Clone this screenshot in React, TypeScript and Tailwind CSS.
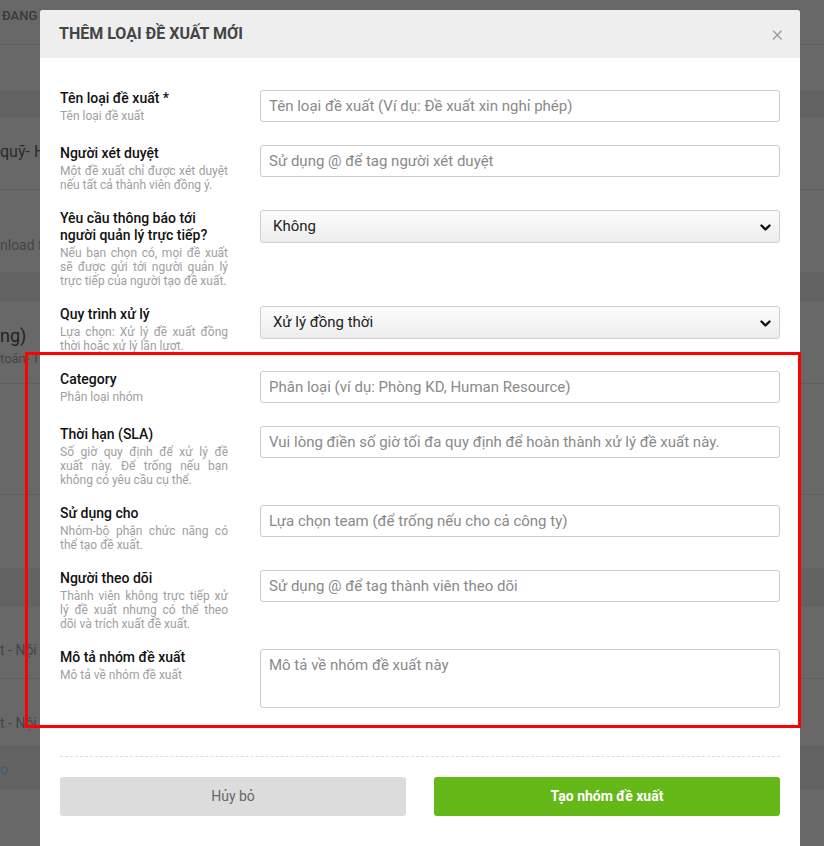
import React from "react";

const rows: {
  title: string;
  sub: string;
  kind: "input" | "select" | "textarea";
  value: string;
}[] = [
  { title: "Tên loại đề xuất *", sub: "Tên loại đề xuất", kind: "input", value: "Tên loại đề xuất (Ví dụ: Đề xuất xin nghỉ phép)" },
  { title: "Người xét duyệt", sub: "Một đề xuất chỉ được xét duyệt nếu tất cả thành viên đồng ý.", kind: "input", value: "Sử dụng @ để tag người xét duyệt" },
  { title: "Yêu cầu thông báo tới người quản lý trực tiếp?", sub: "Nếu bạn chọn có, mọi đề xuất sẽ được gửi tới người quản lý trực tiếp của người tạo đề xuất.", kind: "select", value: "Không" },
  { title: "Quy trình xử lý", sub: "Lựa chọn: Xử lý đề xuất đồng thời hoặc xử lý lần lượt.", kind: "select", value: "Xử lý đồng thời" },
  { title: "Category", sub: "Phân loại nhóm", kind: "input", value: "Phân loại (ví dụ: Phòng KD, Human Resource)" },
  { title: "Thời hạn (SLA)", sub: "Số giờ quy định để xử lý đề xuất này. Để trống nếu bạn không có yêu cầu cụ thể.", kind: "input", value: "Vui lòng điền số giờ tối đa quy định để hoàn thành xử lý đề xuất này." },
  { title: "Sử dụng cho", sub: "Nhóm-bộ phận chức năng có thể tạo đề xuất.", kind: "input", value: "Lựa chọn team (để trống nếu cho cả công ty)" },
  { title: "Người theo dõi", sub: "Thành viên không trực tiếp xử lý đề xuất nhưng có thể theo dõi và trích xuất đề xuất.", kind: "input", value: "Sử dụng @ để tag thành viên theo dõi" },
  { title: "Mô tả nhóm đề xuất", sub: "Mô tả về nhóm đề xuất", kind: "textarea", value: "Mô tả về nhóm đề xuất này" },
];

function Chevron() {
  return (
    <svg width="11" height="8" viewBox="0 0 11 8" className="absolute right-[8px] top-[13px]">
      <path d="M1.5 1.5 L5.5 5.5 L9.5 1.5" fill="none" stroke="#111" strokeWidth="2.4" strokeLinecap="round" strokeLinejoin="round" />
    </svg>
  );
}

function Field({ kind, value }: { kind: string; value: string }) {
  if (kind === "select") {
    return (
      <div className="relative h-[33px] w-full rounded-[3px] border border-[#cfcfcf] bg-linear-to-b from-[#fcfcfc] to-[#ededed] pl-[12px] text-[15px] leading-[31px] text-[#222]">
        {value}
        <Chevron />
      </div>
    );
  }
  if (kind === "textarea") {
    return (
      <textarea
        placeholder={value}
        className="block h-[59px] w-full resize-none rounded-[3px] border border-[#cccccc] px-[8px] py-[5px] text-[15px] leading-[20px] outline-none placeholder:text-[#8a8a8a]"
      />
    );
  }
  return (
    <input
      placeholder={value}
      className="block h-[32px] w-full rounded-[3px] border border-[#cccccc] px-[8px] text-[15px] outline-none placeholder:text-[#8a8a8a]"
    />
  );
}

function Background() {
  return (
    <div className="absolute inset-0 bg-[#686868] text-[#333] font-['Roboto',sans-serif]">
      <div className="h-[45px] border-b border-[#5e5e5e] pl-[2px] pt-[6px] text-[13px] font-medium text-[#3a3a3a]">ĐANG</div>
      <div className="h-[45px]" />
      <div className="h-[28px] bg-[#636363]" />
      <div className="h-[72px] border-b border-[#5e5e5e] pt-[22px] text-[16px] text-[#2a2a2a]">quỹ- H</div>
      <div className="h-[82px] pt-[45px] text-[14px] text-[#444]">nload fil</div>
      <div className="h-[30px] bg-[#636363]" />
      <div className="h-[82px] border-b border-[#5e5e5e] pt-[20px] text-[18px] text-[#222]">
        ng)
        <div className="text-[13px] text-[#444]">toán- T</div>
      </div>
      <div className="h-[111px] border-b border-[#5e5e5e]" />
      <div className="h-[73px]" />
      <div className="h-[39px] bg-[#636363]" />
      <div className="h-[72px] border-b border-[#5e5e5e] pt-[33px] text-[14px] text-[#444]">t - Nội d</div>
      <div className="h-[66px] pt-[34px] text-[14px] text-[#444]">t - Nội d</div>
      <div className="h-[45px] bg-[#636363] pt-[14px] text-[14px] text-[#3a5a7a]">o</div>
    </div>
  );
}

export default function App() {
  return (
    <div className="relative h-[846px] w-[824px] overflow-hidden font-['Roboto',sans-serif]">
      <Background />
      <div className="absolute left-[40px] top-[10px] w-[760px] rounded-t-[3px] bg-white pb-[40px]">
        <div className="flex h-[48px] items-center justify-between rounded-t-[3px] bg-[#eeeeee] pl-[19px] pr-[17px]">
          <div className="text-[16px] font-bold text-[#444]">THÊM LOẠI ĐỀ XUẤT MỚI</div>
          <div className="text-[22px] font-light leading-none text-[#9a9a9a]">×</div>
        </div>
        <div className="px-[20px] pt-[32px]">
          {rows.map((r, i) => (
            <div key={i} className="mb-[18px] flex gap-[32px]">
              <div className="min-h-[37px] w-[168px] shrink-0">
                <div className="text-[14px] font-medium leading-[17px] text-[#111]">{r.title}</div>
                <div className="mt-[2px] text-justify text-[12px] leading-[14px] text-[#a0a0a0]">{r.sub}</div>
              </div>
              <div className="flex-1">
                <Field kind={r.kind} value={r.value} />
              </div>
            </div>
          ))}
          <div className="mt-[48px] border-t border-dashed border-[#dddddd]" />
          <div className="mt-[20px] grid grid-cols-2 gap-[28px]">
            <div className="flex h-[39px] items-center justify-center rounded-[3px] bg-[#dcdcdc] text-[14px] text-[#666]">Hủy bỏ</div>
            <div className="flex h-[39px] items-center justify-center rounded-[3px] bg-[#64b817] text-[14px] font-bold text-white">Tạo nhóm đề xuất</div>
          </div>
        </div>
      </div>
      <div className="absolute left-[25px] top-[352px] h-[376px] w-[776px] border-[3px] border-[#ff0000]" />
    </div>
  );
}
